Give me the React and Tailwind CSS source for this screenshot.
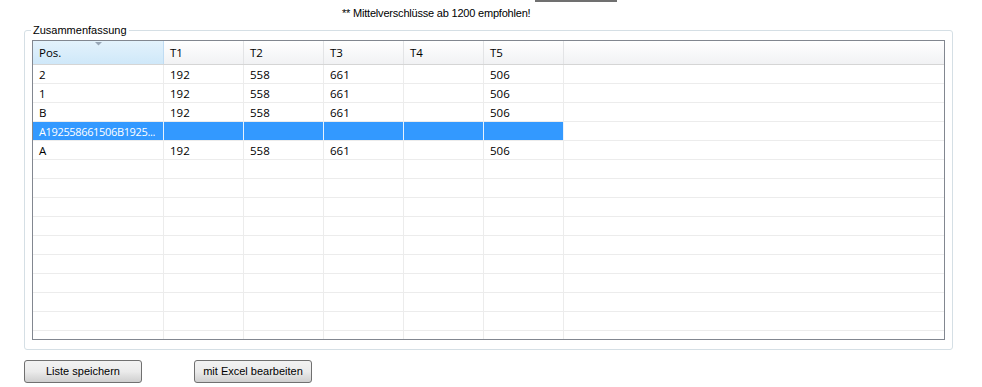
const cols = [
  { key: 'pos', label: 'Pos.', w: 'w-[131px]' },
  { key: 't1', label: 'T1', w: 'w-[80px]' },
  { key: 't2', label: 'T2', w: 'w-[80px]' },
  { key: 't3', label: 'T3', w: 'w-[80px]' },
  { key: 't4', label: 'T4', w: 'w-[80px]' },
  { key: 't5', label: 'T5', w: 'w-[80px]' },
]

const rows = [
  { pos: '2', t1: '192', t2: '558', t3: '661', t4: '', t5: '506' },
  { pos: '1', t1: '192', t2: '558', t3: '661', t4: '', t5: '506' },
  { pos: 'B', t1: '192', t2: '558', t3: '661', t4: '', t5: '506' },
  { pos: 'A192558661506B1925...', t1: '', t2: '', t3: '', t4: '', t5: '', selected: true },
  { pos: 'A', t1: '192', t2: '558', t3: '661', t4: '', t5: '506' },
]

const emptyRows = Array.from({ length: 10 })

function WinButton({ children }) {
  return (
    <button className="flex h-[23px] w-[118px] items-center justify-center rounded-[3px] border border-[#707070] bg-gradient-to-b from-[#f2f2f2] via-[#ebebeb] to-[#cfcfcf] text-[11px] text-black">
      {children}
    </button>
  )
}

export default function App() {
  return (
    <div className="h-[387px] w-[982px] overflow-hidden bg-white font-['Liberation_Sans',sans-serif] text-black">
      {/* top strip */}
      <div className="h-[30px]">
        <div className="ml-[535px] h-[2px] w-[82px] bg-[#707070]" />
        <div className="pl-[342px] pt-[5px] text-[11px] leading-[13px] tracking-[-0.2px]">** Mittelverschlüsse ab 1200 empfohlen!</div>
      </div>

      {/* group box */}
      <div className="relative ml-[24px] h-[320px] w-[929px] rounded-[3px] border border-[#d5dfe5] pl-[7px] pt-[9px]">
        <span className="absolute -top-[8px] left-[6px] bg-white px-[2px] text-[11px] leading-[14px] text-black">Zusammenfassung</span>

        <div className="h-[300px] w-[913px] overflow-hidden border border-[#828790] font-['Open_Sans',sans-serif] text-[11.5px]">
          {/* header */}
          <div className="flex h-[24px] border-b border-[#d5d5d5] bg-gradient-to-b from-white to-[#f1f2f4]">
            {cols.map((c, i) => (
              <div
                key={c.key}
                className={`relative flex items-center border-r pl-[6px] ${c.w} ${i === 0 ? 'border-[#c0dcf3] bg-gradient-to-b from-[#e3f2fc] to-[#cfe8f9]' : 'border-[#e3e4e6]'}`}
              >
                {i === 0 && (
                  <svg className="absolute left-[62px] top-[1px]" width="8" height="4" viewBox="0 0 8 4">
                    <path d="M0 0h7L3.5 3.5z" fill="#97a6b6" />
                  </svg>
                )}
                {c.label}
              </div>
            ))}
            <div className="flex-1" />
          </div>

          {/* data rows */}
          {rows.map((r, ri) => (
            <div key={ri} className="flex h-[19px] border-b border-[#ececec]">
              {cols.map((c) => (
                <div
                  key={c.key}
                  className={`overflow-hidden whitespace-nowrap pl-[6px] leading-[19px] ${c.w} border-r ${r.selected ? 'border-[#e8f2fc] bg-[#3399ff] text-[11px] tracking-[-0.35px] text-white' : 'border-[#ececec]'}`}
                >
                  {r[c.key]}
                </div>
              ))}
              <div className="flex-1" />
            </div>
          ))}

          {emptyRows.map((_, ri) => (
            <div key={ri} className="flex h-[19px] border-b border-[#ececec]">
              {cols.map((c) => (
                <div key={c.key} className={`${c.w} border-r border-[#ececec]`} />
              ))}
              <div className="flex-1" />
            </div>
          ))}
        </div>
      </div>

      {/* buttons */}
      <div className="ml-[24px] mt-[10px] flex gap-[52px]">
        <WinButton>Liste speichern</WinButton>
        <WinButton>mit Excel bearbeiten</WinButton>
      </div>
    </div>
  )
}
